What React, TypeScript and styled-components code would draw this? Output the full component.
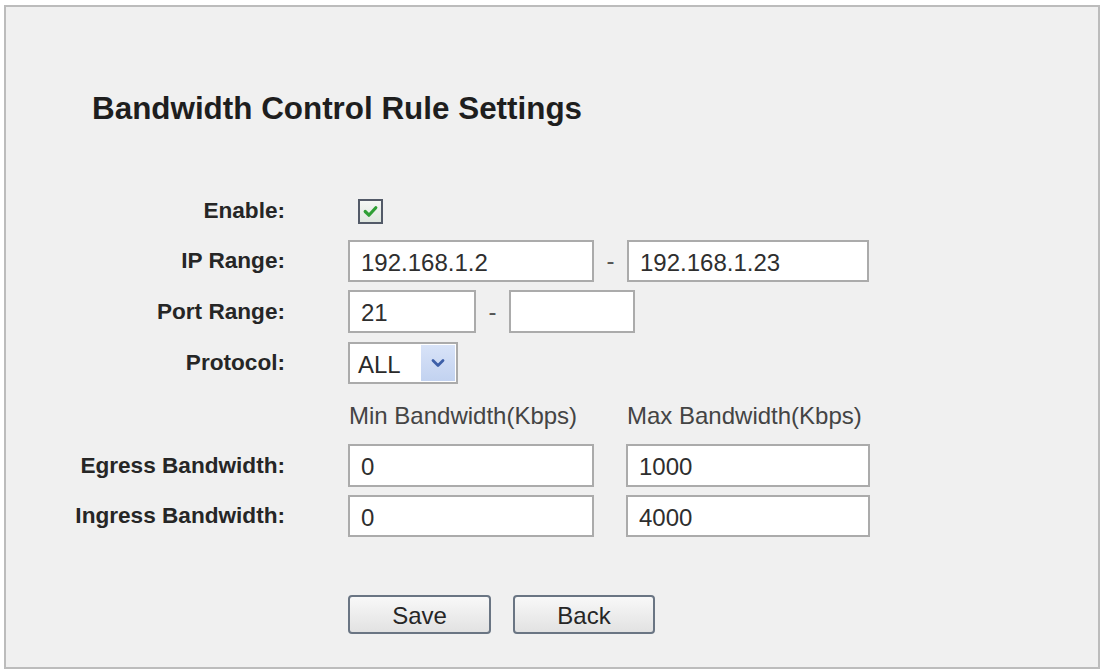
import React from "react";
import styled, { createGlobalStyle } from "styled-components";

const GlobalStyle = createGlobalStyle`
  html, body {
    margin: 0;
    padding: 0;
    background: #ffffff;
  }
  body {
    font-family: "Liberation Sans", Arial, sans-serif;
  }
`;

const Page = styled.div`
  padding: 5px 0 0 4px;
`;

const Frame = styled.div`
  box-sizing: border-box;
  width: 1096px;
  height: 664px;
  border: 2px solid #bcbcbc;
  background: #f0f0f0;
  overflow: hidden;
`;

const Title = styled.h1`
  margin: 84px 0 0 86px;
  font-size: 31.4px;
  line-height: 36px;
  height: 36px;
  font-weight: bold;
  color: #1e1e1e;
`;

const Row = styled.div<{ $top: number; $height: number }>`
  display: grid;
  grid-template-columns: 279px auto;
  column-gap: 63px;
  align-items: center;
  margin-top: ${(p) => p.$top}px;
  height: ${(p) => p.$height}px;
`;

const Label = styled.div`
  text-align: right;
  font-size: 22.6px;
  font-weight: bold;
  color: #262626;
  white-space: nowrap;
`;

const Controls = styled.div<{ $gap?: number }>`
  display: flex;
  align-items: center;
  gap: ${(p) => p.$gap ?? 0}px;
`;

const TextInput = styled.input<{ $w: number; $h?: number }>`
  box-sizing: border-box;
  width: ${(p) => p.$w}px;
  height: ${(p) => p.$h ?? 42}px;
  margin: 0;
  border: 2px solid #ababab;
  border-radius: 0;
  background: #ffffff;
  padding: 3px 0 0 11px;
  font-family: "Liberation Sans", Arial, sans-serif;
  font-size: 24px;
  color: #2e2e2e;
  outline: none;
`;

const Dash = styled.span`
  width: 33px;
  text-align: center;
  font-size: 24px;
  color: #555;
  line-height: 1;
`;

const CheckBox = styled.span`
  box-sizing: border-box;
  display: inline-flex;
  align-items: center;
  justify-content: center;
  width: 25px;
  height: 25px;
  margin-left: 10px;
  border: 2px solid #535a68;
  background: linear-gradient(#f4f7f4, #dfe6df);
`;

const SelectBox = styled.div`
  box-sizing: border-box;
  width: 110px;
  height: 42px;
  border: 2px solid #ababab;
  background: #ffffff;
  display: flex;
  align-items: center;
  justify-content: space-between;
  padding: 1px 1px 1px 8px;
  font-size: 24px;
  color: #2a2a2a;
`;

const SelectText = styled.span`
  padding-top: 3px;
`;

const ArrowBox = styled.span`
  width: 34px;
  height: 36px;
  display: flex;
  align-items: center;
  justify-content: center;
  background: linear-gradient(#d8e3f8, #c2d2f0);
`;

const ColumnHead = styled.span<{ $w: number }>`
  width: ${(p) => p.$w}px;
  font-size: 24px;
  line-height: 28px;
  color: #444444;
  white-space: nowrap;
  padding-left: 1px;
`;

const Button = styled.button<{ $w: number }>`
  box-sizing: border-box;
  width: ${(p) => p.$w}px;
  height: 39px;
  margin: 0;
  border: 2px solid #6a7583;
  border-radius: 4px;
  background: linear-gradient(#f8f8f8, #e2e2e2);
  font-family: "Liberation Sans", Arial, sans-serif;
  font-size: 24px;
  color: #262626;
  padding: 2px 0 0 0;
`;

export default function App() {
  return (
    <>
      <GlobalStyle />
      <Page>
        <Frame>
          <Title>Bandwidth Control Rule Settings</Title>

          <Row $top={71} $height={24}>
            <Label>Enable:</Label>
            <Controls>
              <CheckBox>
                <svg width="17" height="17" viewBox="0 0 16 16">
                  <polyline
                    points="3,8 6.5,11.5 13,4.5"
                    fill="none"
                    stroke="#2e9f34"
                    strokeWidth="3"
                    strokeLinecap="round"
                    strokeLinejoin="round"
                  />
                </svg>
              </CheckBox>
            </Controls>
          </Row>

          <Row $top={18} $height={42}>
            <Label>IP Range:</Label>
            <Controls>
              <TextInput $w={246} readOnly value="192.168.1.2" />
              <Dash>-</Dash>
              <TextInput $w={242} readOnly value="192.168.1.23" />
            </Controls>
          </Row>

          <Row $top={8} $height={43}>
            <Label>Port Range:</Label>
            <Controls>
              <TextInput $w={128} $h={43} readOnly value="21" />
              <Dash>-</Dash>
              <TextInput $w={126} $h={43} readOnly value="" />
            </Controls>
          </Row>

          <Row $top={9} $height={42}>
            <Label>Protocol:</Label>
            <Controls>
              <SelectBox>
                <SelectText>ALL</SelectText>
                <ArrowBox>
                  <svg width="14" height="10" viewBox="0 0 14 10">
                    <polyline
                      points="2,2.5 7,7.5 12,2.5"
                      fill="none"
                      stroke="#3d5fa8"
                      strokeWidth="2.8"
                      strokeLinecap="round"
                      strokeLinejoin="round"
                    />
                  </svg>
                </ArrowBox>
              </SelectBox>
            </Controls>
          </Row>

          <Row $top={18} $height={28}>
            <span />
            <Controls>
              <ColumnHead $w={277}>Min Bandwidth(Kbps)</ColumnHead>
              <ColumnHead $w={244}>Max Bandwidth(Kbps)</ColumnHead>
            </Controls>
          </Row>

          <Row $top={14} $height={43}>
            <Label>Egress Bandwidth:</Label>
            <Controls $gap={32}>
              <TextInput $w={246} $h={43} readOnly value="0" />
              <TextInput $w={244} $h={43} readOnly value="1000" />
            </Controls>
          </Row>

          <Row $top={8} $height={42}>
            <Label>Ingress Bandwidth:</Label>
            <Controls $gap={32}>
              <TextInput $w={246} readOnly value="0" />
              <TextInput $w={244} readOnly value="4000" />
            </Controls>
          </Row>

          <Row $top={58} $height={39}>
            <span />
            <Controls $gap={22}>
              <Button $w={143}>Save</Button>
              <Button $w={142}>Back</Button>
            </Controls>
          </Row>
        </Frame>
      </Page>
    </>
  );
}
